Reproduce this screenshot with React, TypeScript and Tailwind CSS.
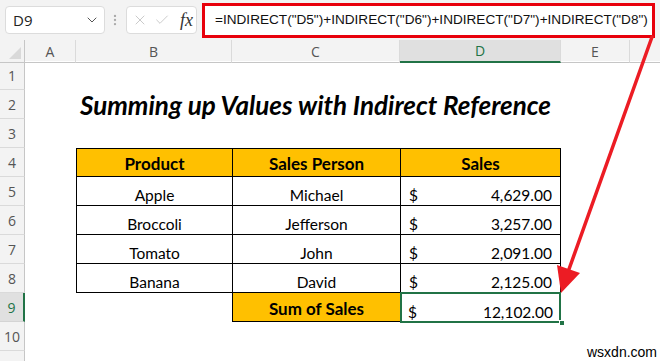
import * as React from "react";
import { ChevronDown, X, Check, EllipsisVertical } from "lucide-react";

const grid = "grid grid-cols-[25px_51px_156px_168px_161px_69px_1fr]";
const cellFont = { fontFamily: "Lato, 'Noto Sans', sans-serif" };

const rows = [
  { product: "Apple", person: "Michael", sales: "4,629.00" },
  { product: "Broccoli", person: "Jefferson", sales: "3,257.00" },
  { product: "Tomato", person: "John", sales: "2,091.00" },
  { product: "Banana", person: "David", sales: "2,125.00" },
];

function RowHead({ n, active }: { n?: number; active?: boolean }) {
  return (
    <div
      className={
        "flex items-center justify-center border-b border-r text-[14px] " +
        (active
          ? "border-b-[#d4d4d4] border-r-2 border-r-[#217346] bg-[#e0e0e0] text-[#217346]"
          : "border-b-[#dadada] border-r-[#c6c6c6] bg-[#f3f3f3] text-[#555]")
      }
      style={{ fontFamily: "'Open Sans', sans-serif" }}
    >
      {n}
    </div>
  );
}

function SheetRow({ n, active, children }: { n?: number; active?: boolean; children?: React.ReactNode }) {
  return (
    <div className={grid + " h-[29px]"} style={cellFont}>
      <RowHead n={n} active={active} />
      {children}
    </div>
  );
}

function Empty() {
  return <div />;
}

export default function App() {
  return (
    <div className="relative h-[361px] w-[660px] overflow-hidden bg-white text-black">
      {/* formula bar */}
      <div className="flex h-[40px] items-center bg-[#f3f3f3] pl-[5px]">
        <div className="flex h-[28px] w-[100px] items-center justify-between rounded-[4px] border border-[#dcdcdc] bg-white pl-[7px] pr-[4px]">
          <span className="text-[15px] text-[#222]" style={{ fontFamily: "'Open Sans', sans-serif" }}>
            D9
          </span>
          <ChevronDown className="h-4 w-4 text-[#555]" strokeWidth={1.5} />
        </div>
        <EllipsisVertical className="ml-[3px] h-4 w-[14px] text-[#aaa]" strokeWidth={2} />
        <div className="ml-[4px] flex h-[28px] w-[71px] items-center gap-[6px] rounded-[4px] border border-[#dcdcdc] bg-white pl-[5px]">
          <X className="h-[16px] w-[16px] text-[#bdbdbd]" strokeWidth={1.2} />
          <Check className="h-[16px] w-[16px] text-[#bdbdbd]" strokeWidth={1.2} />
          <span className="ml-[4px] text-[18px] italic text-[#333]" style={{ fontFamily: "'Liberation Serif', serif" }}>
            fx
          </span>
        </div>
        <div className="ml-[5px] mt-[3px] flex h-[35px] w-[453px] items-center self-start border-[3px] border-[#e8000b] bg-white pl-[10px]">
          <span className="whitespace-nowrap text-[13.6px] text-[#111]" style={{ fontFamily: "'Liberation Sans', Arial, sans-serif" }}>
            =INDIRECT("D5")+INDIRECT("D6")+INDIRECT("D7")+INDIRECT("D8")
          </span>
        </div>
      </div>

      {/* column headers */}
      <div className={grid + " h-[21px] bg-[#f3f3f3] text-[14px] text-[#555]"} style={{ fontFamily: "'Open Sans', sans-serif" }}>
        <div className="relative border-b border-r border-[#c6c6c6]">
          <div className="absolute bottom-[3px] right-[3px] h-0 w-0 border-b-[12px] border-l-[12px] border-b-[#d9d9d9] border-l-transparent" />
        </div>
        {["A", "B", "C"].map((c) => (
          <div key={c} className="flex items-center justify-center border-b border-r border-b-[#c6c6c6] border-r-[#dadada]">
            {c}
          </div>
        ))}
        <div className="flex items-center justify-center border-b-2 border-r border-b-[#217346] border-r-[#dadada] bg-[#e0e0e0] text-[#217346]">
          D
        </div>
        <div className="flex items-center justify-center border-b border-r border-b-[#c6c6c6] border-r-[#dadada]">E</div>
        <div className="border-b border-[#c6c6c6]" />
      </div>

      <SheetRow n={1} />
      <SheetRow n={2}>
        <Empty />
        <div className="col-span-3 flex items-center justify-center overflow-visible pt-[1px] pr-[6px]">
          <span className="whitespace-nowrap text-[26px] font-bold italic leading-none">
            Summing up Values with Indirect Reference
          </span>
        </div>
      </SheetRow>
      <SheetRow n={3} />
      <SheetRow n={4}>
        <Empty />
        <div className="flex items-center justify-center border-y border-l border-black bg-[#ffc000] pt-[2px] text-[17px] font-bold leading-none">
          Product
        </div>
        <div className="flex items-center justify-center border-y border-l border-black bg-[#ffc000] pt-[2px] text-[17px] font-bold leading-none">
          Sales Person
        </div>
        <div className="flex items-center justify-center border border-black bg-[#ffc000] pt-[2px] text-[17px] font-bold leading-none">
          Sales
        </div>
      </SheetRow>
      {rows.map((r, i) => (
        <SheetRow key={r.product} n={5 + i}>
          <Empty />
          <div className="flex items-end justify-center border-b border-l border-black pb-[2px] text-[15.5px] leading-[16px]">
            {r.product}
          </div>
          <div className="flex items-end justify-center border-b border-l border-black pb-[2px] text-[15.5px] leading-[16px]">
            {r.person}
          </div>
          <div className="flex items-end justify-between border-x border-b border-black pb-[2px] pl-[8px] pr-[8px] text-[15.5px] leading-[16px]">
            <span>$</span>
            <span>{r.sales}</span>
          </div>
        </SheetRow>
      ))}
      <SheetRow n={9} active>
        <Empty />
        <Empty />
        <div className="flex items-center justify-center border-b border-l border-black bg-[#ffc000] pt-[2px] text-[17px] font-bold leading-none">
          Sum of Sales
        </div>
        <div className="relative flex items-end justify-between pb-[2px] pl-[8px] pr-[8px] text-[15.5px] leading-[16px]">
          <div className="absolute -top-px left-0 right-0 bottom-[-1px] border-2 border-[#217346]" />
          <div className="absolute bottom-[-4px] right-[-4px] h-[6px] w-[6px] border border-white bg-[#217346]" />
          <span>$</span>
          <span>12,102.00</span>
        </div>
      </SheetRow>
      <SheetRow n={10} />
      <SheetRow />

      {/* red arrow */}
      <svg className="pointer-events-none absolute inset-0" width={660} height={361}>
        <line x1={652} y1={37} x2={568} y2={272} stroke="#ec1c24" strokeWidth={3.5} strokeLinecap="round" />
        <polygon points="561,293 580,273 557,265" fill="#ec1c24" />
      </svg>

      <span
        className="absolute left-[587px] top-[342px] text-[14px] text-black"
        style={{ fontFamily: "'Liberation Sans', Arial, sans-serif" }}
      >
        wsxdn.com
      </span>
    </div>
  );
}
